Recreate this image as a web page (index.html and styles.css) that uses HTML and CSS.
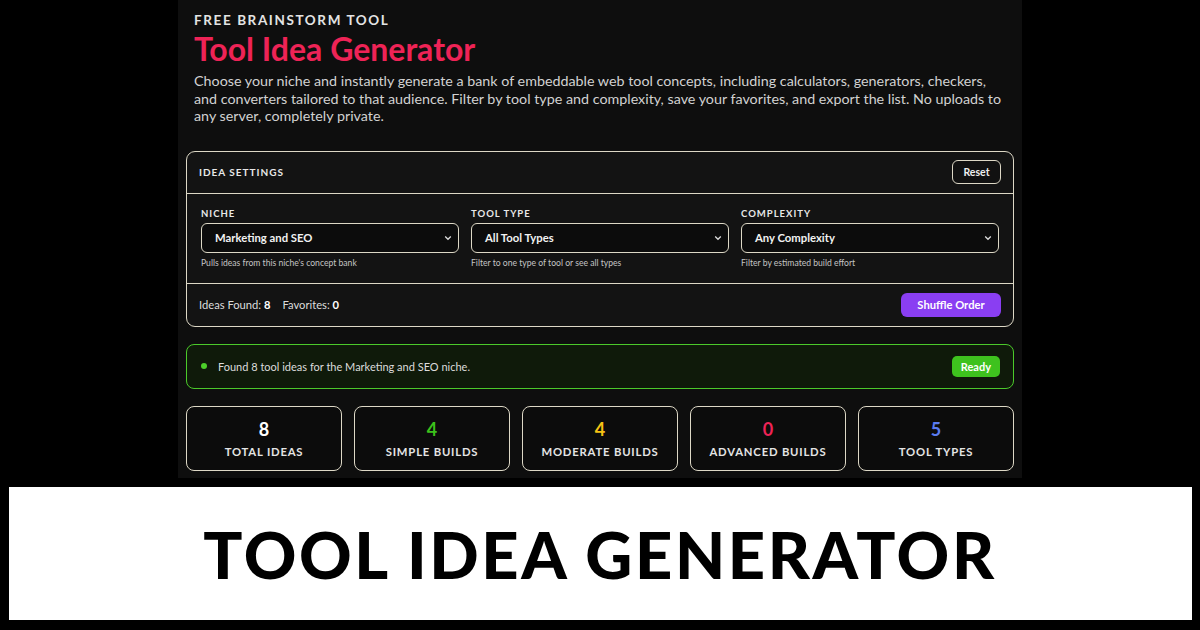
FILE: index.html
```html
<!DOCTYPE html>
<html lang="en">
<head>
  <meta charset="UTF-8" />
  <meta name="viewport" content="width=device-width, initial-scale=1.0"/>
  <title>Tool Idea Generator</title>
  <link rel="stylesheet" href="styles.css">
</head>
<body>

  <!-- Tool panel -->
  <div class="panel">
    <div class="eyebrow">FREE BRAINSTORM TOOL</div>
    <h1 class="title">Tool Idea Generator</h1>
    <p class="intro">Choose your niche and instantly generate a bank of embeddable web tool concepts, including calculators, generators, checkers, and converters tailored to that audience. Filter by tool type and complexity, save your favorites, and export the list. No uploads to any server, completely private.</p>

    <div class="card">
      <div class="card-head">
        <span class="card-title">IDEA SETTINGS</span>
        <button class="btn-outline">Reset</button>
      </div>

      <div class="fields">
        <div class="field">
          <label>NICHE</label>
          <div class="select"><span>Marketing and SEO</span><svg viewBox="0 0 10 6"><path d="M1.5 1.2 5 4.6l3.5-3.4"/></svg></div>
          <small>Pulls ideas from this niche's concept bank</small>
        </div>
        <div class="field">
          <label>TOOL TYPE</label>
          <div class="select"><span>All Tool Types</span><svg viewBox="0 0 10 6"><path d="M1.5 1.2 5 4.6l3.5-3.4"/></svg></div>
          <small>Filter to one type of tool or see all types</small>
        </div>
        <div class="field">
          <label>COMPLEXITY</label>
          <div class="select"><span>Any Complexity</span><svg viewBox="0 0 10 6"><path d="M1.5 1.2 5 4.6l3.5-3.4"/></svg></div>
          <small>Filter by estimated build effort</small>
        </div>
      </div>

      <div class="card-foot">
        <div class="counts">Ideas Found: <b>8</b><span class="gap"></span>Favorites: <b>0</b></div>
        <button class="btn-purple">Shuffle Order</button>
      </div>
    </div>

    <div class="status">
      <span class="dot"></span>
      <span class="status-text">Found 8 tool ideas for the Marketing and SEO niche.</span>
      <span class="badge">Ready</span>
    </div>

    <div class="stats">
      <div class="stat"><div class="num white">8</div><div class="lbl">TOTAL IDEAS</div></div>
      <div class="stat"><div class="num green">4</div><div class="lbl">SIMPLE BUILDS</div></div>
      <div class="stat"><div class="num yellow">4</div><div class="lbl">MODERATE BUILDS</div></div>
      <div class="stat"><div class="num red">0</div><div class="lbl">ADVANCED BUILDS</div></div>
      <div class="stat"><div class="num blue">5</div><div class="lbl">TOOL TYPES</div></div>
    </div>
  </div>

  <!-- Caption banner -->
  <div class="banner">TOOL IDEA GENERATOR</div>

</body>
</html>
```

FILE: styles.css
```css
/* Reset */
* { margin: 0; padding: 0; box-sizing: border-box; }

body {
  font-family: 'Lato', 'Open Sans', sans-serif;
  background: #000;
  color: #e6e6e6;
  width: 1200px;
  height: 630px;
  overflow: hidden;
  display: flex;
  flex-direction: column;
  align-items: center;
}

/* Dark tool panel */
.panel {
  width: 844px;
  height: 478px;
  background: #0e0e0e;
  padding: 12px 8px 0 8px;
}

.eyebrow {
  font-size: 13.5px;
  font-weight: 700;
  letter-spacing: 1.6px;
  color: #e4e4e4;
  padding-left: 8px;
}
.title {
  font-size: 32px;
  font-weight: 700;
  color: #ee2356;
  padding-left: 8px;
  margin-top: 4px;
  line-height: 34px;
}
.intro {
  font-size: 14.3px;
  line-height: 17.5px;
  color: #d2d2d2;
  padding: 0 8px;
  margin-top: 6px;
}

/* Settings card */
.card {
  margin-top: 26px;
  border: 1.5px solid #ddd8c6;
  border-radius: 9px;
  background: #131313;
}
.card-head {
  display: flex; align-items: center; justify-content: space-between;
  height: 42px; padding: 0 12px 0 12px;
  border-bottom: 1.5px solid #ddd8c6;
}
.card-title { font-size: 10px; font-weight: 700; letter-spacing: 1px; color: #e8e8e8; }
.btn-outline {
  font-family: inherit; font-size: 10.5px; font-weight: 700;
  color: #eee; background: #111;
  border: 1.5px solid #ddd8c6; border-radius: 6px;
  width: 49px; height: 24px; cursor: pointer;
}

.fields {
  display: grid; grid-template-columns: 1fr 1fr 1fr; gap: 12px;
  padding: 14px 14px 0 14px;
  height: 90px;
  border-bottom: 1.5px solid #ddd8c6;
}
.field label {
  display: block; font-size: 9.5px; font-weight: 700;
  letter-spacing: 1px; color: #e8e8e8; margin-bottom: 4px;
}
.select {
  display: flex; align-items: center; justify-content: space-between;
  height: 30px; padding: 0 6px 0 13px;
  border: 1.5px solid #ddd8c6; border-radius: 6px;
  background: #0c0c0c;
  font-size: 11.3px; font-weight: 700; color: #f2f2f2;
}
.select svg { width: 8px; height: 6px; fill: none; stroke: #ddd; stroke-width: 1.6; }
.field small { display: block; font-size: 8.6px; color: #c4c4c4; margin-top: 5px; }

.card-foot {
  display: flex; align-items: center; justify-content: space-between;
  height: 42px; padding: 0 12px;
}
.counts { font-size: 11.2px; color: #dcdcdc; }
.counts b { color: #fff; }
.counts .gap { display: inline-block; width: 12px; }
.btn-purple {
  font-family: inherit; font-size: 11.2px; font-weight: 700;
  color: #fff; background: #8a3ef2; border: none;
  border-radius: 6px; width: 100px; height: 24px; cursor: pointer;
}

/* Status line */
.status {
  display: flex; align-items: center;
  margin-top: 17px; height: 45px; padding: 0 13px 0 14px;
  border: 1.5px solid #4bc92a; border-radius: 8px;
  background: #0f1a0a;
}
.dot { width: 6px; height: 6px; border-radius: 50%; background: #4ccf2a; margin-right: 11px; }
.status-text { flex: 1; font-size: 11px; color: #dcdcdc; }
.badge {
  font-size: 11px; font-weight: 700; color: #fff;
  background: #3ec21e; border-radius: 5px;
  padding: 4px 9px;
}

/* Stat boxes */
.stats {
  display: grid; grid-template-columns: repeat(5, 1fr); gap: 12px;
  margin-top: 17px;
}
.stat {
  height: 65px;
  border: 1.5px solid #ddd8c6; border-radius: 8px;
  background: #0c0c0c;
  display: flex; flex-direction: column; align-items: center; justify-content: center;
}
.num { font-size: 18px; font-weight: 700; line-height: 20px; }
.lbl { font-size: 11.3px; font-weight: 700; letter-spacing: 0.8px; color: #e4e4e4; margin-top: 6px; }
.white { color: #fff; }
.green { color: #3cc11c; }
.yellow { color: #f5c214; }
.red { color: #ee2356; }
.blue { color: #5b7cf0; }

/* Bottom caption */
.banner {
  margin-top: 9px;
  width: 1183px;
  height: 133px;
  background: #fff;
  color: #000;
  display: flex; align-items: center; justify-content: center;
  font-size: 65px;
  font-weight: 900;
  letter-spacing: 2.6px;
}
```
